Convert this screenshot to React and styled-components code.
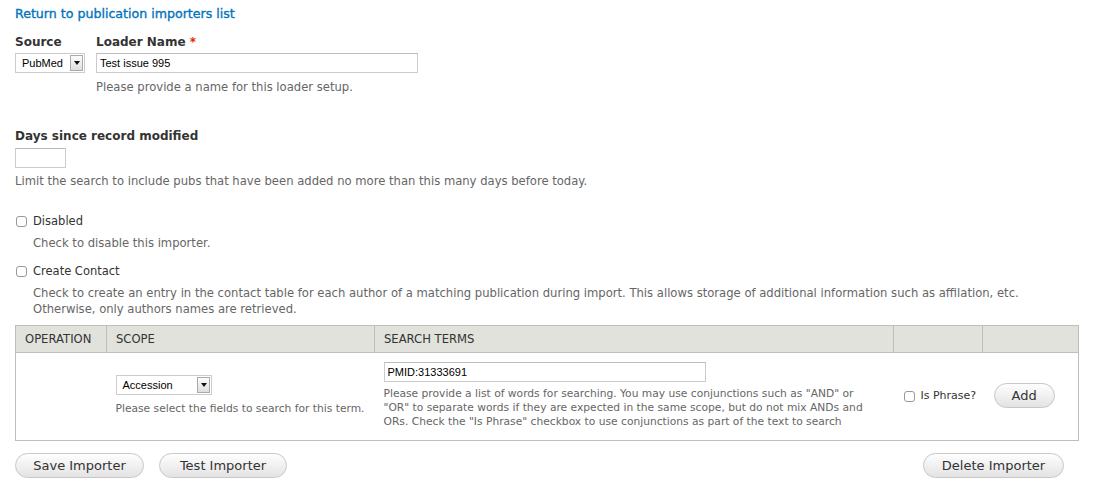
import React from 'react';
import styled, { createGlobalStyle } from 'styled-components';

const GlobalStyle = createGlobalStyle`
	body {
		margin: 0;
		background: #fff;
		font-family: "DejaVu Sans", "Open Sans", sans-serif;
		color: #333;
	}
`;

function ImporterForm() {
	return (
		<Page>
			<GlobalStyle />
			<BackLink href="#">Return to publication importers list</BackLink>

			<TopRow>
				<Field>
					<Label>Source</Label>
					<Select width={70}>
						<span>PubMed</span>
						<SelectArrow />
					</Select>
				</Field>
				<Field>
					<Label>Loader Name <Required>*</Required></Label>
					<TextInput width={322} defaultValue="Test issue 995" />
					<Description>Please provide a name for this loader setup.</Description>
				</Field>
			</TopRow>

			<Section>
				<Label>Days since record modified</Label>
				<TextInput width={51} />
				<Description gap={6}>Limit the search to include pubs that have been added no more than this many days before today.</Description>
			</Section>

			<CheckItem>
				<CheckLabel><Checkbox type="checkbox" />Disabled</CheckLabel>
				<CheckDescription>Check to disable this importer.</CheckDescription>
			</CheckItem>

			<CheckItem>
				<CheckLabel><Checkbox type="checkbox" />Create Contact</CheckLabel>
				<CheckDescription>
					Check to create an entry in the contact table for each author of a matching publication during import. This allows storage of additional information such as affilation, etc. Otherwise, only authors names are retrieved.
				</CheckDescription>
			</CheckItem>

			<CriteriaTable>
				<thead>
					<tr>
						<Th width={91}>Operation</Th>
						<Th width={268}>Scope</Th>
						<Th width={519}>Search Terms</Th>
						<Th width={89}></Th>
						<Th width={96}></Th>
					</tr>
				</thead>
				<tbody>
					<tr>
						<Td></Td>
						<Td>
							<Select width={96}>
								<span>Accession</span>
								<SelectArrow />
							</Select>
							<CellHelp>Please select the fields to search for this term.</CellHelp>
						</Td>
						<Td>
							<TextInput width={322} defaultValue="PMID:31333691" />
							<CellHelp wrap>
								Please provide a list of words for searching. You may use conjunctions such as "AND" or "OR" to separate words if they are expected in the same scope, but do not mix ANDs and ORs. Check the "Is Phrase" checkbox to use conjunctions as part of the text to search
							</CellHelp>
						</Td>
						<Td inset={9}>
							<CheckLabel small><Checkbox type="checkbox" />Is Phrase?</CheckLabel>
						</Td>
						<Td inset={11}>
							<Button>Add</Button>
						</Td>
					</tr>
				</tbody>
			</CriteriaTable>

			<Actions>
				<Button minWidth={129}>Save Importer</Button>
				<Button minWidth={128}>Test Importer</Button>
				<Spacer />
				<Button minWidth={141}>Delete Importer</Button>
			</Actions>
		</Page>
	);
}

const Page = styled.div`
	padding: 5px 15px 0 15px;
	width: 1096px;
	box-sizing: border-box;
`;

const BackLink = styled.a`
	display: block;
	color: #0074bd;
	font-weight: normal;
	font-size: 12.6px;
	line-height: 18px;
	text-decoration: none;
	-webkit-text-stroke: 0.35px #0074bd;
`;

const TopRow = styled.div`
	display: flex;
	gap: 11px;
	margin-top: 10px;
`;

const Field = styled.div`
	display: flex;
	flex-direction: column;
	align-items: flex-start;
`;

const Section = styled.div`
	margin-top: 33px;
`;

const Label = styled.div`
	font-weight: bold;
	font-size: 12px;
	line-height: 18px;
	margin-bottom: 2px;
	color: #333;
`;

const Required = styled.span`
	color: #e32700;
`;

const Description = styled.div`
	font-size: 11.6px;
	line-height: 14px;
	color: #666;
	margin-top: ${p => p.gap ?? 7}px;
	white-space: nowrap;
`;

const CellHelp = styled.div`
	font-size: 10.7px;
	line-height: 14px;
	color: #666;
	max-width: 482px;
	margin-top: ${p => (p.wrap ? 5 : 7)}px;
	white-space: ${p => (p.wrap ? 'normal' : 'nowrap')};
`;

const TextInput = styled.input`
	width: ${p => p.width}px;
	height: 20px;
	box-sizing: border-box;
	border: 1px solid #ccc;
	border-top-color: #bbb;
	padding: 1px 3px;
	font-family: "Liberation Sans", Arial, sans-serif;
	font-size: 11px;
	color: #000;
	outline: none;
`;

const Select = styled.div`
	width: ${p => p.width}px;
	height: 20px;
	box-sizing: border-box;
	border: 1px solid #ccc;
	display: flex;
	align-items: center;
	justify-content: space-between;
	padding-left: 6px;
	font-family: "Liberation Sans", Arial, sans-serif;
	font-size: 11px;
	color: #000;
	background: #fff;
`;

const SelectArrow = styled.span`
	width: 13px;
	height: 16px;
	margin-right: 1px;
	border: 1px solid #aaa;
	box-sizing: border-box;
	background: linear-gradient(#fdfdfd, #dedede);
	position: relative;
	&::after {
		content: '';
		position: absolute;
		left: 3px;
		top: 5px;
		border-left: 3px solid transparent;
		border-right: 3px solid transparent;
		border-top: 4px solid #111;
	}
`;

const CheckItem = styled.div`
	margin-top: 25px;
	& + & {
		margin-top: 12px;
	}
`;

const CheckLabel = styled.label`
	display: flex;
	align-items: center;
	font-size: ${p => (p.small ? '11px' : '11.5px')};
	line-height: 16px;
	color: #333;
	white-space: nowrap;
`;

const Checkbox = styled.input`
	appearance: none;
	flex-shrink: 0;
	width: 11px;
	height: 11px;
	margin: 1px 6px 0 1px;
	border: 1px solid #999;
	border-radius: 3px;
	background: #fff;
`;

const CheckDescription = styled(Description)`
	margin-left: 18px;
	margin-top: 6px;
	line-height: 16px;
	white-space: normal;
`;

const CriteriaTable = styled.table`
	margin-top: 8px;
	width: 1063px;
	table-layout: fixed;
	border-collapse: collapse;
	border: 1px solid #bebfb9;
`;

const Th = styled.th`
	width: ${p => p.width}px;
	height: 27px;
	box-sizing: border-box;
	background: #e1e2dc;
	border: 1px solid #bebfb9;
	text-align: left;
	font-weight: normal;
	font-size: 11.6px;
	text-transform: uppercase;
	padding: 0 9px;
	color: #333;
`;

const Td = styled.td`
	vertical-align: middle;
	padding: 9px ${p => p.inset ?? 9}px 11px;
	font-size: 11px;
	overflow: visible;
`;

const Button = styled.button`
	font-family: "DejaVu Sans", "Open Sans", sans-serif;
	font-size: 13px;
	color: #333;
	height: 25px;
	min-width: ${p => (p.minWidth ? `${p.minWidth}px` : 'auto')};
	padding: 0 17px;
	border: 1px solid #c8c8c8;
	border-radius: 20px;
	background: linear-gradient(#fefefe, #e3e3e3);
	cursor: pointer;
`;

const Actions = styled.div`
	display: flex;
	gap: 15px;
	margin-top: 12px;
	width: 1049px;
`;

const Spacer = styled.div`
	flex: 1;
`;

export default ImporterForm;
